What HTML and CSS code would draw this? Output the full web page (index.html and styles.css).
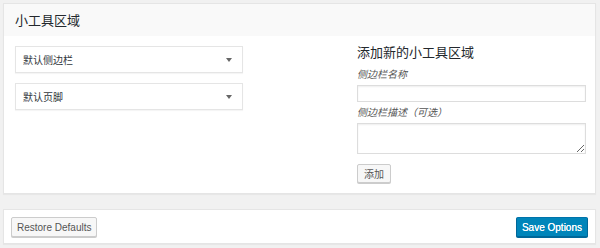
FILE: index.html
```html
<!DOCTYPE html>
<html lang="zh-CN">
<head>
    <meta charset="UTF-8">
    <title>小工具区域</title>
    <link rel="stylesheet" href="styles.css">
</head>
<body>
    <div class="wrap">
        <div class="postbox">
            <h2 class="hndle">小工具区域</h2>
            <div class="inside">
                <div class="areas">
                    <div class="select">
                        <span>默认侧边栏</span>
                        <span class="arrow"></span>
                    </div>
                    <div class="select">
                        <span>默认页脚</span>
                        <span class="arrow"></span>
                    </div>
                </div>
                <div class="new-area">
                    <h3>添加新的小工具区域</h3>
                    <label class="field-label">侧边栏名称</label>
                    <input type="text" class="field-input">
                    <label class="field-label">侧边栏描述（可选）</label>
                    <textarea class="field-text"></textarea>
                    <button class="button">添加</button>
                </div>
            </div>
        </div>

        <div class="actions">
            <button class="button">Restore Defaults</button>
            <button class="button button-primary">Save Options</button>
        </div>
    </div>
</body>
</html>
```

FILE: styles.css
```css
body, h2, h3 {
    margin: 0;
    padding: 0;
}
body {
    background-color: #f1f1f1;
    font-family: 'Liberation Sans', 'Noto Sans CJK SC', sans-serif;
    color: #444;
}
.wrap {
    padding: 3px 4px 4px 3px;
}
.postbox {
    background-color: #fff;
    border: 1px solid #e5e5e5;
    box-shadow: 0 1px 1px rgba(0, 0, 0, 0.04);
}
.hndle {
    background-color: #f9f9f9;
    height: 32px;
    line-height: 34px;
    padding-left: 11px;
    font-size: 13px;
    font-weight: normal;
    color: #23282d;
}
.inside {
    display: flex;
    justify-content: space-between;
    padding: 10px 9px 10px 11px;
}
.areas {
    width: 228px;
    display: flex;
    flex-direction: column;
    gap: 10px;
}
.select {
    height: 25px;
    border: 1px solid #e5e5e5;
    box-shadow: 0 1px 1px rgba(0, 0, 0, 0.04);
    display: flex;
    align-items: center;
    justify-content: space-between;
    padding: 0 10px 0 7px;
    font-size: 10px;
    color: #32373c;
}
.arrow {
    width: 0;
    height: 0;
    border-left: 3px solid transparent;
    border-right: 3px solid transparent;
    border-top: 4px solid #666;
    margin-top: 1px;
}
.new-area {
    width: 229px;
    display: flex;
    flex-direction: column;
    align-items: flex-start;
}
.new-area h3 {
    font-size: 13px;
    font-weight: normal;
    color: #23282d;
    line-height: 18px;
    margin-top: -2px;
}
.field-label {
    font-size: 10px;
    font-style: italic;
    color: #555;
    line-height: 14px;
    margin-top: 6px;
    margin-bottom: 3px;
}
.field-input + .field-label {
    margin-top: 4px;
}
.field-input, .field-text {
    box-sizing: border-box;
    width: 229px;
    border: 1px solid #ddd;
    box-shadow: inset 0 1px 2px rgba(0, 0, 0, 0.07);
    margin: 0;
}
.field-input {
    height: 17px;
}
.field-text {
    height: 31px;
    resize: vertical;
}
.button {
    font-family: 'Liberation Sans', 'Noto Sans CJK SC', sans-serif;
    font-size: 10px;
    height: 20px;
    padding: 0 5px;
    border: 1px solid #ccc;
    border-radius: 2px;
    background-color: #f7f7f7;
    box-shadow: 0 1px 0 #ccc;
    color: #555;
    cursor: pointer;
}
.new-area .button {
    margin-top: 10px;
    height: 19px;
    padding: 0 6px;
}
.actions {
    margin-top: 15px;
    background-color: #fff;
    border: 1px solid #e5e5e5;
    box-shadow: 0 1px 1px rgba(0, 0, 0, 0.04);
    display: flex;
    justify-content: space-between;
    align-items: center;
    padding: 7px 7px 6px 7px;
}
.button-primary {
    background-color: #0085ba;
    border-color: #0073aa #006799 #006799;
    box-shadow: 0 1px 0 #006799;
    color: #fff;
    text-shadow: 0 0 0.4px #fff;
}
```
